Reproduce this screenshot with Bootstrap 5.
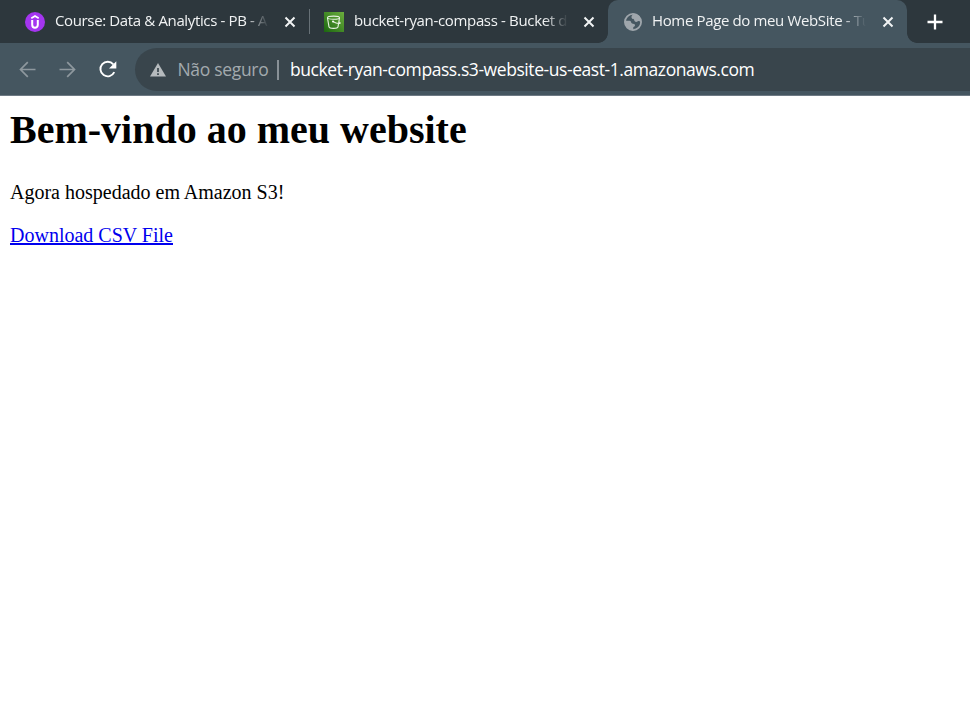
<!DOCTYPE html>
<html lang="pt-BR">
<head>
<meta charset="utf-8">
<meta name="viewport" content="width=device-width, initial-scale=1">
<title>Home Page do meu WebSite</title>
<link href="https://cdn.jsdelivr.net/npm/bootstrap@5.3.0/dist/css/bootstrap.min.css" rel="stylesheet">
<style>
body { font-family: "Segoe UI", "Open Sans", "Noto Sans", sans-serif; background: #fff; }
.tab-strip { height: 43px; background: #2d373d; }
.browser-tab { width: 298px; padding: 0 11px 0 14px; color: #f1f3f4; }
.tab-first { width: 310px; padding: 0 12px 0 25px; }
.tab-active { width: 299px; padding-left: 15px; background: #455660; border-radius: 10px 10px 0 0; }
.tab-active::before, .tab-active::after { content: ""; position: absolute; bottom: 0; width: 10px; height: 10px; }
.tab-active::before { left: -10px; background: radial-gradient(circle at 0 0, transparent 9.5px, #455660 10.2px); }
.tab-active::after { right: -10px; background: radial-gradient(circle at 100% 0, transparent 9.5px, #455660 10.2px); }
.tab-divider { width: 1px; height: 25px; background: #677177; margin-left: -1px; }
.tab-title { width: 214px; margin-left: 10px; padding-bottom: 3px; line-height: 24px; font-size: 15px; white-space: nowrap; overflow: hidden;
  -webkit-mask-image: linear-gradient(90deg, #000 calc(100% - 24px), transparent); mask-image: linear-gradient(90deg, #000 calc(100% - 24px), transparent); }
.title-a { letter-spacing: -.36px; }
.title-b { letter-spacing: -.34px; }
.title-c { letter-spacing: -.36px; margin-left: 9px; }
.tool-bar { height: 53px; background: #455660; border-bottom: 1px solid #6e7a84; padding: 5px 0 4px 17px; }
.address { height: 43px; background: #39454c; border-radius: 22px 0 0 22px; margin-left: 17px; padding-left: 15px; font-size: 17.5px; white-space: nowrap; }
.insecure { color: #a3aaae; margin-left: 11.5px; width: 91px; letter-spacing: -.32px; }
.addr-divider { width: 2px; height: 20px; background: #899197; margin: 0 11px 0 8.5px; }
.url { color: #fff; letter-spacing: -.43px; }
.site { font-family: "Liberation Serif", "Times New Roman", serif; font-size: 20px; line-height: 23px; color: #000; padding: 11px 10px; }
.site h1 { font-size: 40px; line-height: 46px; font-weight: 700; margin-bottom: 28px; }
.site p { margin-bottom: 20px; }
.site a { color: #00e; }
</style>
<script src="https://cdn.jsdelivr.net/npm/bootstrap@5.3.0/dist/js/bootstrap.bundle.min.js"></script>
</head>
<body>
<header>
  <div class="tab-strip d-flex align-items-stretch">
    <div class="browser-tab tab-first d-flex align-items-center flex-shrink-0">
      <svg class="flex-shrink-0" width="20" height="20" viewBox="0 0 20 20"><circle cx="10" cy="10" r="10" fill="#a435f0"/><path d="M6.300 6.300 10 4.100l3.700 2.200" fill="none" stroke="#fff" stroke-width="1.700"/><path d="M7.200 8v4.700c0 3.900 5.600 3.900 5.600 0V8" fill="none" stroke="#fff" stroke-width="2"/></svg>
      <span class="tab-title title-a">Course: Data &amp; Analytics - PB - A</span>
      <svg class="ms-auto flex-shrink-0" width="16" height="16" viewBox="0 0 16 16"><path d="m3.500 3.500 9 9m0-9-9 9" stroke="#f1f3f4" stroke-width="2"/></svg>
    </div>
    <span class="tab-divider align-self-center"></span>
    <div class="browser-tab d-flex align-items-center flex-shrink-0">
      <svg class="flex-shrink-0" width="20" height="20" viewBox="0 0 20 20"><defs><linearGradient id="leaf" x1="0" y1="1" x2="1" y2="0"><stop stop-color="#1b660f"/><stop offset="1" stop-color="#6cae3e"/></linearGradient></defs><path fill="url(#leaf)" d="M0 0h20v20H0z"/><g fill="none" stroke="#e8f2e2" stroke-width="1.100"><ellipse cx="9.500" cy="5.700" rx="6" ry="1.600"/><path d="m3.500 6 1.500 8.800c.5 2.100 8.500 2.100 9 0L15.500 6M9 9.500c2 1.300 5.200 2.300 6.900 1.900.8-.4-.2-1.300-1.400-2"/></g><circle cx="9" cy="9.500" r="1" fill="#fff"/></svg>
      <span class="tab-title title-b">bucket-ryan-compass - Bucket d</span>
      <svg class="ms-auto flex-shrink-0" width="16" height="16" viewBox="0 0 16 16"><path d="m3.500 3.500 9 9m0-9-9 9" stroke="#f1f3f4" stroke-width="2"/></svg>
    </div>
    <div class="browser-tab tab-active position-relative d-flex align-items-center flex-shrink-0">
      <svg class="flex-shrink-0" width="20" height="20" viewBox="0 0 20 20"><circle cx="10" cy="10" r="8.100" fill="none" stroke="#9fa6ac" stroke-width="1.800"/><path d="M10.800 1.800C9 3.200 7.600 5 9 6.400c1 .8 2.200.2 2.200 1.700 0 1.900 2.300 2.300 3.600 1.200.9-.6 1.800-.2 3 .7.800-4.400-2.600-8.500-7-8.200zM2 8.800h4.500c1.700 0 1.300 2 2.500 2.600 1.400.5 2.800 0 3 1.600.1 1-.6 1.800-1.700 2V18C5.500 18.500 1 14 2 8.800z" fill="#9fa6ac"/></svg>
      <span class="tab-title title-c">Home Page do meu WebSite - Tu</span>
      <svg class="ms-auto flex-shrink-0" width="16" height="16" viewBox="0 0 16 16"><path d="m3.500 3.500 9 9m0-9-9 9" stroke="#f1f3f4" stroke-width="2"/></svg>
    </div>
    <svg class="align-self-center flex-shrink-0 ms-3" width="24" height="24" viewBox="0 0 24 24"><path d="M12 4.500v15M4.500 12h15" stroke="#fff" stroke-width="2.300"/></svg>
  </div>
  <div class="tool-bar d-flex align-items-center">
    <div class="d-flex align-items-center gap-3 flex-shrink-0">
      <svg width="24" height="24" viewBox="0 0 24 24"><path d="M18.500 11.500H3.500m7.300-7.300-7.300 7.300 7.300 7.300" fill="none" stroke="#8e989e" stroke-width="1.700"/></svg>
      <svg width="24" height="24" viewBox="0 0 24 24"><path d="M2.500 11.500h15m-7.300-7.300 7.300 7.300-7.300 7.300" fill="none" stroke="#8e989e" stroke-width="1.700"/></svg>
      <svg width="21" height="24" viewBox="0 0 21 24"><path d="M16.300 6.300A7.300 7.300 0 1 0 17.300 14.200" fill="none" stroke="#fff" stroke-width="1.900"/><path d="M19.300 3.200v7.200H12z" fill="#fff"/></svg>
    </div>
    <div class="address d-flex align-items-center flex-grow-1">
      <svg class="flex-shrink-0" width="16" height="16" viewBox="0 0 16 16"><path d="M8 1 16 14.500H0z" fill="#b5babd"/><path d="M8 6v4m0 1.300v1.700" stroke="#39454c" stroke-width="1.700"/></svg>
      <span class="insecure">Não seguro</span>
      <span class="addr-divider"></span>
      <span class="url">bucket-ryan-compass.s3-website-us-east-1.amazonaws.com</span>
    </div>
  </div>
</header>
<main class="site">
  <h1>Bem-vindo ao meu website</h1>
  <p>Agora hospedado em Amazon S3!</p>
  <a href="#">Download CSV File</a>
</main>
</body>
</html>
